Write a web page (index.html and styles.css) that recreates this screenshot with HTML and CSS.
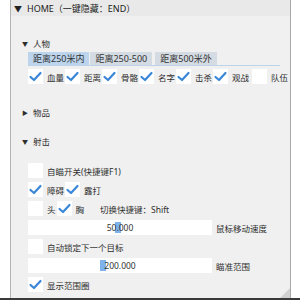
FILE: index.html
```html
<!DOCTYPE html>
<html>
<head>
<meta charset="utf-8">
<link rel="stylesheet" href="styles.css">
</head>
<body>
<div class="win">
  <div class="titlebar"><span class="tri">▼</span><span>HOME（一键隐藏：END）</span></div>
  <div class="content">
    <div class="hdr h-people"><span class="tri">▼</span><span>人物</span></div>
    <div class="tabs">
      <div class="tab sel">距离250米内</div>
      <div class="tab">距离250-500</div>
      <div class="tab t3">距离500米外</div>
    </div>
    <div class="row r-first">
      <label class="cb"><span class="box"><svg viewBox="0 0 15 15"><polyline points="2.5,8 6,11 12.5,4"/></svg></span>血量</label>
      <label class="cb"><span class="box"><svg viewBox="0 0 15 15"><polyline points="2.5,8 6,11 12.5,4"/></svg></span>距离</label>
      <label class="cb"><span class="box"><svg viewBox="0 0 15 15"><polyline points="2.5,8 6,11 12.5,4"/></svg></span>骨骼</label>
      <label class="cb"><span class="box"><svg viewBox="0 0 15 15"><polyline points="2.5,8 6,11 12.5,4"/></svg></span>名字</label>
      <label class="cb"><span class="box"><svg viewBox="0 0 15 15"><polyline points="2.5,8 6,11 12.5,4"/></svg></span>击杀</label>
      <label class="cb"><span class="box"><svg viewBox="0 0 15 15"><polyline points="2.5,8 6,11 12.5,4"/></svg></span>观战</label>
      <label class="cb wide"><span class="box"></span>队伍</label>
    </div>
    <div class="hdr h-items"><span class="tri">▶</span><span>物品</span></div>
    <div class="hdr h-shoot"><span class="tri">▼</span><span>射击</span></div>
    <div class="rows">
      <div class="row"><label class="cb"><span class="box"></span>自瞄开关(快捷键F1)</label></div>
      <div class="row">
        <label class="cb"><span class="box"><svg viewBox="0 0 15 15"><polyline points="2.5,8 6,11 12.5,4"/></svg></span>障碍</label>
        <label class="cb"><span class="box"><svg viewBox="0 0 15 15"><polyline points="2.5,8 6,11 12.5,4"/></svg></span>露打</label>
      </div>
      <div class="row">
        <label class="cb"><span class="box"></span>头</label>
        <label class="cb"><span class="box"><svg viewBox="0 0 15 15"><polyline points="2.5,8 6,11 12.5,4"/></svg></span>胸</label>
        <span class="hotkey">切换快捷键：Shift</span>
      </div>
      <div class="row">
        <div class="slider"><span class="grab" style="left:87px"></span><span class="val">50.000</span></div>
        <span class="slabel">鼠标移动速度</span>
      </div>
      <div class="row"><label class="cb"><span class="box"></span>自动锁定下一个目标</label></div>
      <div class="row">
        <div class="slider"><span class="grab" style="left:72px"></span><span class="val">200.000</span></div>
        <span class="slabel">瞄准范围</span>
      </div>
      <div class="row"><label class="cb"><span class="box"><svg viewBox="0 0 15 15"><polyline points="2.5,8 6,11 12.5,4"/></svg></span>显示范围圈</label></div>
    </div>
  </div>
  <div class="grip"></div>
</div>
<div class="bottomline"></div>
</body>
</html>
```
FILE: styles.css
```css
html, body {
  margin: 0;
  padding: 0;
  background: #ffffff;
}
body {
  width: 300px;
  height: 300px;
  overflow: hidden;
  font-family: "Noto Sans", "Noto Sans CJK SC", sans-serif;
  font-size: 8.5px;
  color: #2e2e2e;
  white-space: nowrap;
}
.win {
  position: relative;
  margin-left: 10px;
  width: 279px;
  height: 298px;
  background: #f0f0f0;
  border-left: 1px solid #b4b4b4;
  border-right: 1px solid #a8a8a8;
  box-sizing: content-box;
}
.titlebar {
  height: 16px;
  background: #e9e9e9;
  display: flex;
  align-items: center;
  padding-left: 3px;
  font-size: 9px;
  color: #222;
}
.titlebar .tri {
  font-size: 8px;
  margin-right: 5px;
}
.content {
  padding-left: 17px;
}
.hdr {
  height: 14px;
  display: flex;
  align-items: center;
  margin-left: -6px;
}
.hdr .tri {
  font-size: 6px;
  width: 11px;
}
.h-people { margin-top: 20px; }
.h-items { margin-top: 21px; }
.h-shoot { margin-top: 15px; }
.tabs {
  display: flex;
  margin-top: 2px;
  height: 13px;
  border-bottom: 1px solid #bdd3ea;
  width: 252px;
}
.tab {
  height: 13px;
  line-height: 13px;
  padding: 0 5px;
  background: #d4dbe2;
  margin-right: 1px;
  color: #333;
  font-size: 9px;
  flex: none;
}
.tab.sel {
  background: #bcd4ec;
}
.tab.t3 { margin-left: 2px; }
.row {
  display: flex;
  align-items: center;
  height: 15px;
}
.r-first {
  margin-top: 3px;
}
.r-first .cb { margin-right: 1px; }
.r-first .cb.wide .box { margin-left: 2px; }
.cb {
  display: flex;
  align-items: center;
  gap: 4px;
  margin-right: 1px;
  flex: none;
}
.box {
  width: 15px;
  height: 15px;
  background: #ffffff;
  display: block;
  flex: none;
}
.box svg {
  width: 15px;
  height: 15px;
  display: block;
}
.box polyline {
  fill: none;
  stroke: #3a86d8;
  stroke-width: 2.2;
  stroke-linecap: round;
  stroke-linejoin: round;
}
.rows {
  margin-top: 15px;
  display: flex;
  flex-direction: column;
  gap: 4px;
}
.hotkey {
  margin-left: 15px;
}
.slider {
  position: relative;
  width: 184px;
  height: 15px;
  background: #ffffff;
  display: flex;
  align-items: center;
  justify-content: center;
  flex: none;
}
.grab {
  position: absolute;
  top: 2px;
  width: 6px;
  height: 11px;
  background: #7db2ea;
}
.val {
  position: relative;
  color: #333;
}
.slabel {
  margin-left: 4px;
}
.grip {
  position: absolute;
  right: 0;
  bottom: 0;
  width: 0;
  height: 0;
  border-left: 10px solid transparent;
  border-bottom: 10px solid #d2d2d2;
}
.bottomline {
  height: 2px;
  background: #3a3a3a;
}
```
